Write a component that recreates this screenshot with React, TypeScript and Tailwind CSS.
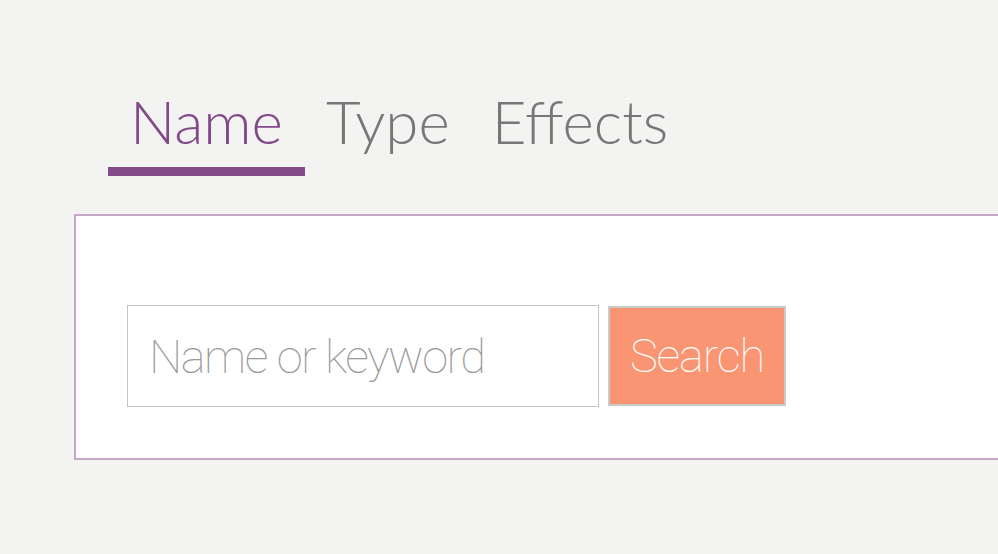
export default function App() {
  const tabs = ["Name", "Type", "Effects"];
  return (
    <div className="w-[998px] h-[554px] overflow-hidden bg-[#f3f3f2]">
      <div className="flex pl-[108px] pt-[82px]" style={{ fontFamily: "Lato, sans-serif" }}>
        {tabs.map((t, i) => (
          <div
            key={t}
            className={
              i === 0
                ? "px-[22px] h-[94px] border-b-[9px] border-[#834a88] text-[#834a88] text-[60px] font-light leading-[78px]"
                : "px-[21px] h-[94px] text-[#777777] text-[60px] font-light leading-[78px]"
            }
          >
            {t}
          </div>
        ))}
      </div>
      <div className="ml-[74px] mt-[38px] w-[1000px] h-[246px] border-2 border-[#c4a6c9] bg-white flex items-start gap-[9px] pl-[51px] pt-[89px]">
        <input
          placeholder="Name or keyword"
          className="w-[472px] h-[102px] border border-[#c4c4c4] px-[21px] text-[47px] font-thin tracking-[-1.5px] text-[#999] placeholder:text-[#999] outline-none"
          style={{ fontFamily: "Roboto, sans-serif" }}
        />
        <button
          className="mt-[1px] w-[178px] h-[100px] bg-[#f99572] border-2 border-[#cacaca] text-white text-[47px] font-thin tracking-[-1.2px]"
          style={{ fontFamily: "Roboto, sans-serif" }}
        >
          Search
        </button>
      </div>
    </div>
  );
}
